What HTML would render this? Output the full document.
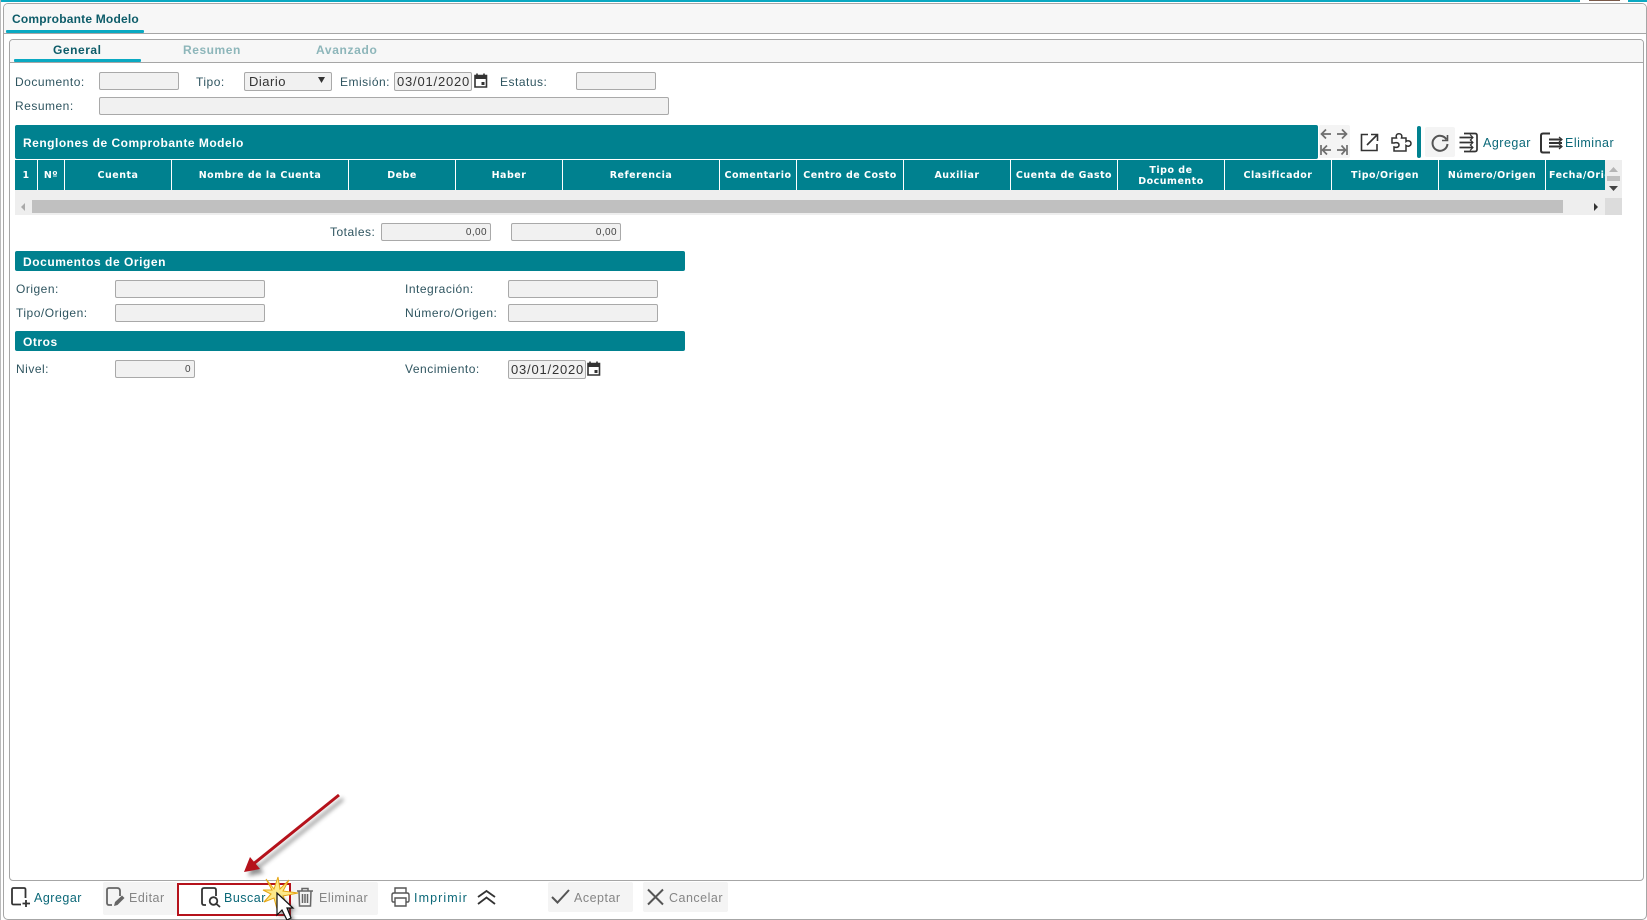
<!DOCTYPE html>
<html><head><meta charset="utf-8"><title>Comprobante Modelo</title>
<style>
html,body{margin:0;padding:0;background:#fff}
#p{position:relative;width:1647px;height:920px;overflow:hidden;background:#fff;font-family:"Liberation Sans",sans-serif}
#p>*{position:absolute}
.b{box-sizing:border-box}
.l{font-size:12px;letter-spacing:.5px;color:#2f5560;line-height:16px;white-space:nowrap}
.i{box-sizing:border-box;background:#f1f1f1;border:1px solid #a9a9a9;border-radius:2px;height:18px}
.n{box-sizing:border-box;background:#f1f1f1;border:1px solid #a9a9a9;border-radius:2px;height:18px;font-size:10px;letter-spacing:.4px;line-height:18px;text-align:right;padding-right:3px;color:#444}
.d{box-sizing:border-box;background:#f1f1f1;border:1px solid #a9a9a9;border-radius:2px;height:19px;font-size:13px;letter-spacing:.8px;line-height:17px;color:#333;padding-left:2px;white-space:nowrap}
.bar{background:#00818f;border-radius:2px;color:#fff;font-weight:bold;font-size:12px;letter-spacing:.55px;line-height:22px;padding-left:8px;box-sizing:border-box;left:15px;width:670px;height:20px}
.th{top:160px;height:30px;box-sizing:border-box;background:#00818f;border-right:1px solid #fff;color:#fff;font:bold 9.5px/11px "DejaVu Sans",sans-serif;letter-spacing:.5px;display:flex;align-items:center;justify-content:center;text-align:center;overflow:hidden;white-space:nowrap}
.t{font-size:12.5px;letter-spacing:.5px;line-height:16px;white-space:nowrap;color:#0b6878}
.g{color:#858585}
.bg{background:#f4f4f4;border-radius:2px}
svg{overflow:visible}
</style></head><body>
<div id="p">
<div style="left:0;top:0;width:1580px;height:2px;background:#0aa9c2"></div>
<div style="left:1589px;top:0;width:31px;height:1px;background:#7a5a4a"></div>
<div style="left:1628px;top:0;width:19px;height:2px;background:#0aa9c2"></div>

<div style="left:0;top:0;width:1px;height:920px;background:#bbb"></div>
<div class="b" style="left:3px;top:3px;width:1644px;height:917px;border:1px solid #a6a6a6;border-radius:5px"></div>
<div class="b" style="left:4px;top:4px;width:1642px;height:30px;background:#f7f7f7;border-bottom:1px solid #a6a6a6;border-radius:4px 4px 0 0"></div>
<div style="left:6px;top:30px;width:138px;height:3px;background:#0aa9c2;border-radius:1px"></div>
<div style="left:12px;top:11px;font-size:12px;font-weight:bold;letter-spacing:.2px;line-height:16px;color:#0d5c69;white-space:nowrap">Comprobante Modelo</div>

<div class="b" style="left:9px;top:39px;width:1635px;height:842px;border:1px solid #a6a6a6;border-radius:4px"></div>
<div class="b" style="left:10px;top:40px;width:1633px;height:23px;background:#f7f7f7;border-bottom:1px solid #a6a6a6;border-radius:3px 3px 0 0"></div>
<div style="left:14px;top:59px;width:127px;height:3px;background:#0aa9c2;border-radius:1px"></div>
<div style="left:53px;top:42px;font-size:12px;font-weight:bold;letter-spacing:.55px;line-height:16px;color:#0d5c69">General</div>
<div style="left:183px;top:42px;font-size:12px;font-weight:bold;letter-spacing:.55px;line-height:16px;color:#8db6ba">Resumen</div>
<div style="left:316px;top:42px;font-size:12px;font-weight:bold;letter-spacing:.65px;line-height:16px;color:#8db6ba">Avanzado</div>

<div class="l" style="left:15px;top:74px">Documento:</div>
<div class="i" style="left:99px;top:72px;width:80px"></div>
<div class="l" style="left:196px;top:74px">Tipo:</div>
<div class="d" style="left:244px;top:72px;width:88px;padding-left:4px;letter-spacing:.5px">Diario</div>
<svg style="left:318px;top:77px" width="8" height="7"><path d="M0 0H7L3.5 6Z" fill="#333"/></svg>
<div class="l" style="left:340px;top:74px">Emisión:</div>
<div class="d" style="left:394px;top:72px;width:78px">03/01/2020</div>
<svg style="left:474px;top:73px" width="14" height="15" viewBox="0 0 14 15"><path d="M1 2.5H12.5V14H1Z" fill="none" stroke="#333" stroke-width="1.6"/><path d="M1 2H13V6H1Z" fill="#333"/><path d="M3 0.5V3M10 0.5V3" stroke="#333" stroke-width="1.6"/><rect x="7.5" y="9" width="3" height="3" fill="#333"/></svg>
<div class="l" style="left:500px;top:74px">Estatus:</div>
<div class="i" style="left:576px;top:72px;width:80px"></div>
<div class="l" style="left:15px;top:98px">Resumen:</div>
<div class="i" style="left:99px;top:97px;width:570px"></div>

<div style="left:15px;top:125px;width:1303px;height:34px;background:#00818f;border-radius:2px"></div>
<div style="left:23px;top:135px;color:#fff;font-size:12px;font-weight:bold;letter-spacing:.5px;line-height:16px">Renglones de Comprobante Modelo</div>

<div class="th" style="left:15px;width:23px">1</div>
<div class="th" style="left:38px;width:27px">Nº</div>
<div class="th" style="left:65px;width:107px">Cuenta</div>
<div class="th" style="left:172px;width:177px">Nombre de la Cuenta</div>
<div class="th" style="left:349px;width:107px">Debe</div>
<div class="th" style="left:456px;width:107px">Haber</div>
<div class="th" style="left:563px;width:157px">Referencia</div>
<div class="th" style="left:720px;width:77px">Comentario</div>
<div class="th" style="left:797px;width:107px">Centro de Costo</div>
<div class="th" style="left:904px;width:107px">Auxiliar</div>
<div class="th" style="left:1011px;width:107px">Cuenta de Gasto</div>
<div class="th" style="left:1118px;width:107px;padding-top:1px">Tipo de<br>Documento</div>
<div class="th" style="left:1225px;width:107px">Clasificador</div>
<div class="th" style="left:1332px;width:107px">Tipo/Origen</div>
<div class="th" style="left:1439px;width:107px">Número/Origen</div>
<div class="th" style="left:1546px;width:59px;border-right:0;justify-content:flex-start;padding-left:3px">Fecha/Origen</div>

<div style="left:15px;top:190px;width:1590px;height:10px;background:#eee"></div>
<div style="left:15px;top:200px;width:1590px;height:15px;background:#eee"></div>
<div style="left:32px;top:200px;width:1531px;height:13px;background:#c0c0c0"></div>
<svg style="left:20px;top:203px" width="6" height="8"><path d="M5 0V8L1 4Z" fill="#aaa"/></svg>
<svg style="left:1593px;top:203px" width="6" height="8"><path d="M1 0V8L5 4Z" fill="#333"/></svg>
<div style="left:1605px;top:160px;width:17px;height:38px;background:#eee"></div>
<div style="left:1605px;top:198px;width:17px;height:17px;background:#dcdcdc"></div>
<svg style="left:1609px;top:167px" width="10" height="6"><path d="M0 5H9L4.5 0Z" fill="#b5b5b5"/></svg>
<div style="left:1607px;top:176px;width:13px;height:5px;background:#c0c0c0"></div>
<svg style="left:1609px;top:186px" width="10" height="6"><path d="M0 0H9L4.5 5Z" fill="#444"/></svg>

<!-- toolbar icons -->
<div class="bg" style="left:1319px;top:125px;width:31px;height:33px"></div>
<svg style="left:1319px;top:125px" width="32" height="33" viewBox="0 0 32 33" fill="none" stroke="#6e6e6e" stroke-width="1.7"><path d="M2 9H12M7 4.500L2.500 9L7 13.500M28 9H18M23 4.500L27.500 9L23 13.500M2 20V30M3 25H12M8 20.500L3.500 25L8 29.500M28 20V30M27 25H18M22.500 20.500L26.500 25L22.500 29.500"/></svg>
<svg style="left:1360px;top:133px" width="19" height="19" viewBox="0 0 19 19" fill="none" stroke="#333" stroke-width="1.6"><path d="M8 1.500H1.500V17.500H17V11M7 12L17 2M11 1.500H17.500V8"/></svg>
<svg style="left:1391px;top:133px" width="21" height="19" viewBox="0 0 21 19" fill="none" stroke="#333" stroke-width="1.500"><path d="M1 5H5.500C4.500 2 6 0.800 8 0.800C10 0.800 11.500 2 10.500 5H15V8.500C17 7 20 8 20 10.500C20 13 17 14 15 12.500V18H3V14C6 15 8 14 8 12C8 10 6 9 3 10H1Z"/></svg>
<div style="left:1417px;top:126px;width:4px;height:32px;background:#00818f;border-radius:2px"></div>
<div class="bg" style="left:1425px;top:127px;width:30px;height:30px"></div>
<svg style="left:1431px;top:134px" width="18" height="18" viewBox="0 0 18 18" fill="none" stroke="#555" stroke-width="2"><path d="M15.500 5.500A7.500 7.500 0 1 0 16.500 10"/><path d="M16.500 1V6.500H11" stroke-width="1.600"/></svg>
<svg style="left:1459px;top:132px" width="20" height="21" viewBox="0 0 20 21" fill="none" stroke="#333" stroke-width="1.700"><path d="M5 1.500H16Q18 1.500 18 3.500V17.500Q18 19.500 16 19.500H5M0.500 5.500H14M0.500 10.500H14M0.500 15.500H14"/><path d="M11 2.500L14 5.500L11 8.500M11 7.500L14 10.500L11 13.500M11 12.500L14 15.500L11 18.500" stroke-width="1.100"/></svg>
<div class="t" style="left:1483px;top:135px">Agregar</div>
<svg style="left:1540px;top:132px" width="24" height="22" viewBox="0 0 24 22" fill="none" stroke="#333" stroke-width="2"><path d="M10 1.500H3Q1 1.500 1 3.500V18.500Q1 20.500 3 20.500H10M9 7.500H22M9 11H22M9 14.500H22" /><path d="M19 5L22 7.500L19 10M19 12L22 14.500L19 17" stroke-width="1.200"/></svg>
<div class="t" style="left:1565px;top:135px">Eliminar</div>

<!-- totals -->
<div class="l" style="left:330px;top:224px">Totales:</div>
<div class="n" style="left:381px;top:223px;width:110px">0,00</div>
<div class="n" style="left:511px;top:223px;width:110px">0,00</div>

<div class="bar" style="top:251px">Documentos de Origen</div>
<div class="l" style="left:16px;top:281px">Origen:</div>
<div class="i" style="left:115px;top:280px;width:150px"></div>
<div class="l" style="left:405px;top:281px">Integración:</div>
<div class="i" style="left:508px;top:280px;width:150px"></div>
<div class="l" style="left:16px;top:305px">Tipo/Origen:</div>
<div class="i" style="left:115px;top:304px;width:150px"></div>
<div class="l" style="left:405px;top:305px">Número/Origen:</div>
<div class="i" style="left:508px;top:304px;width:150px"></div>

<div class="bar" style="top:331px">Otros</div>
<div class="l" style="left:16px;top:361px">Nivel:</div>
<div class="n" style="left:115px;top:360px;width:80px">0</div>
<div class="l" style="left:405px;top:361px">Vencimiento:</div>
<div class="d" style="left:508px;top:360px;width:78px">03/01/2020</div>
<svg style="left:587px;top:361px" width="14" height="15" viewBox="0 0 14 15"><path d="M1 2.500H12.500V14H1Z" fill="none" stroke="#333" stroke-width="1.600"/><path d="M1 2H13V6H1Z" fill="#333"/><path d="M3 0.500V3M10 0.500V3" stroke="#333" stroke-width="1.600"/><rect x="7.500" y="9" width="3" height="3" fill="#333"/></svg>

<!-- bottom bar -->
<svg style="left:11px;top:887px" width="20" height="20" viewBox="0 0 20 20" fill="none" stroke="#333" stroke-width="1.800"><path d="M10 17.500H2.500Q1 17.500 1 16V2.500Q1 1 2.500 1H13Q14.500 1 14.500 2.500V11M15 13V20M11.500 16.500H19"/></svg>
<div class="t" style="left:34px;top:890px">Agregar</div>
<div class="bg" style="left:103px;top:882px;width:74px;height:33px"></div>
<svg style="left:106px;top:887px" width="20" height="20" viewBox="0 0 20 20" fill="none" stroke="#666" stroke-width="1.800"><path d="M6 18H3Q1 18 1 16V3Q1 1 3 1H11Q14 1 14 4V9"/><path d="M8 19L9 15L16 8.500L18.500 11L11.500 18Z" fill="#666" stroke="none"/></svg>
<div class="t g" style="left:129px;top:890px">Editar</div>

<svg style="left:201px;top:887px" width="20" height="20" viewBox="0 0 20 20" fill="none" stroke="#333" stroke-width="1.800"><path d="M5 18H3Q1 18 1 16V3Q1 1 3 1H13Q15 1 15 3V9"/><circle cx="12.500" cy="14" r="3.800"/><path d="M15.500 17L19 20"/></svg>
<div class="t" style="left:224px;top:890px">Buscar</div>
<div class="bg" style="left:291px;top:882px;width:87px;height:33px"></div>
<svg style="left:296px;top:887px" width="18" height="20" viewBox="0 0 18 20" fill="none" stroke="#666" stroke-width="1.500"><path d="M1 4H17M6 4V1.500H12V4M3 4L3.500 19H14.500L15 4M6.500 7V16M9 7V16M11.500 7V16"/></svg>
<div class="t g" style="left:319px;top:890px">Eliminar</div>
<svg style="left:391px;top:887px" width="19" height="20" viewBox="0 0 19 20" fill="none" stroke="#555" stroke-width="1.400"><path d="M4 6V1H15V6M4 15H2Q1 15 1 13V8Q1 6 3 6H16Q18 6 18 8V13Q18 15 17 15H15M4 11H15V19H4Z"/></svg>
<div class="t" style="left:414px;top:890px;letter-spacing:1.1px">Imprimir</div>
<svg style="left:477px;top:889px" width="19" height="16" viewBox="0 0 19 16" fill="none" stroke="#333" stroke-width="1.800"><path d="M1 8L9.500 2L18 8M1 15L9.500 8.500L18 15"/></svg>
<div class="bg" style="left:548px;top:882px;width:85px;height:30px"></div>
<svg style="left:551px;top:889px" width="19" height="15" viewBox="0 0 19 15" fill="none" stroke="#555" stroke-width="2"><path d="M1 8L6.500 13.500L18 1"/></svg>
<div class="t g" style="left:574px;top:890px">Aceptar</div>
<div class="bg" style="left:643px;top:882px;width:85px;height:30px"></div>
<svg style="left:647px;top:889px" width="17" height="16" viewBox="0 0 17 16" fill="none" stroke="#555" stroke-width="2"><path d="M1 0.500L16 15.500M16 0.500L1 15.500"/></svg>
<div class="t g" style="left:669px;top:890px">Cancelar</div>

<div class="b" style="left:177px;top:883px;width:114px;height:33px;border:2px solid #b5121b"></div>

<!-- annotation arrow, star and cursor -->
<svg style="left:0;top:0" width="1647" height="920">
<defs><filter id="s" x="-30%" y="-30%" width="160%" height="160%"><feGaussianBlur stdDeviation="2"/></filter></defs>
<g filter="url(#s)" opacity=".6" transform="translate(4 4)"><path d="M339 795L252 865" stroke="#444" stroke-width="3"/><path d="M244 872L250 857L260 869Z" fill="#444"/></g>
<path d="M339 795L252 865" stroke="#b5121b" stroke-width="3"/>
<path d="M244 872L250 857L260 869Z" fill="#b5121b"/>
<path d="M266 879L274 889L278 877L280 889L289 880L283 891L298 893L283 896L287 905L279 898L277 909L274 898L264 902L271 894L263 890L272 890Z" fill="#fde98a" stroke="#e6a512" stroke-width="1"/>
<g filter="url(#s)" opacity=".6" transform="translate(3 3)"><path d="M277 893V915L282 910L287 920L291 918L287 908L293 908Z" fill="#333"/></g>
<path d="M277 893V915L282 910L287 920L291 918L287 908L293 908Z" fill="#fff" stroke="#111" stroke-width="1.200"/>
</svg>
</div>
</body></html>
